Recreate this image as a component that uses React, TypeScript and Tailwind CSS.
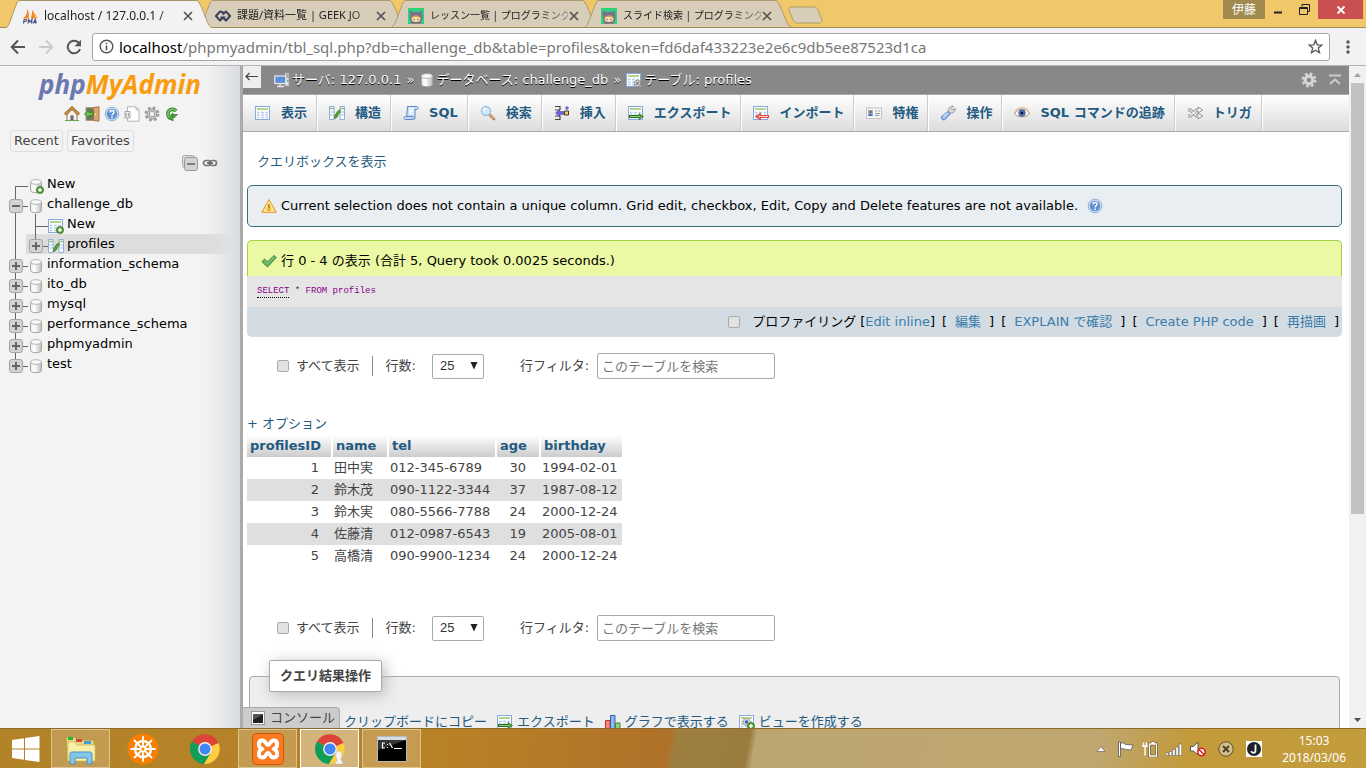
import React from 'react'

type P = { className?: string }

const Svg = ({ children, className = 'size-4' }: { children: React.ReactNode; className?: string }) => (
  <svg viewBox="0 0 16 16" className={'shrink-0 ' + className} fill="none" aria-hidden="true">
    {children}
  </svg>
)

const Grid = () => (
  <>
    <rect x=".5" y="1.5" width="14" height="13" fill="#fff" stroke="#86a8dc" />
    <path d="M2 4h11" stroke="#9bcb7a" strokeWidth="1.600" />
    <path d="M2 7.5h2.500M6 7.500h3M10.500 7.500H13M2 10h2.500M6 10h3M10.500 10H13M2 12.500h2.500M6 12.500h3M10.500 12.500H13" stroke="#b4cbea" strokeWidth="1.400" />
  </>
)
const Plus = () => (
  <>
    <circle cx="12" cy="12" r="3.600" fill="#4f9a2f" stroke="#2f6e17" strokeWidth=".6" />
    <path d="M12 10v4M10 12h4" stroke="#fff" strokeWidth="1.400" />
  </>
)
const TableIcon = (p: P) => <Svg {...p}><Grid /></Svg>
const TableNewIcon = (p: P) => <Svg {...p}><Grid /><Plus /></Svg>
const TableGearIcon = (p: P) => (
  <Svg {...p}>
    <Grid />
    <circle cx="11.500" cy="11.500" r="3.200" fill="#ccc" stroke="#8a8a8a" strokeWidth="1.400" strokeDasharray="1.600 .9" />
    <circle cx="11.500" cy="11.500" r="1.200" fill="#777" />
  </Svg>
)
const StructIcon = (p: P) => (
  <Svg {...p}>
    <path d="M.5 1.500h4.500v13H.5zM11 1.500h4.500v13H11z" fill="#fff" stroke="#8fb0de" />
    <path d="M1 3.500h4M11 3.500h4" stroke="#8fc06c" strokeWidth="1.500" />
    <path d="M1 7h4M1 10h4M11 7h4M11 10h4" stroke="#a9c3e6" />
    <path d="M5 12.500c3 0 3-6 6.500-6.500" stroke="#2f7d1e" strokeWidth="3" />
    <path d="M5 12.500c3 0 3-6 6.500-6.500" stroke="#66b04a" strokeWidth="1.400" />
  </Svg>
)
const DbShape = () => (
  <>
    <path d="M2.500 4v8.500c0 1.300 2.500 2.200 5.500 2.200s5.500-.9 5.500-2.200V4" fill="url(#dbg)" stroke="#a5a5a5" />
    <ellipse cx="8" cy="4" rx="5.500" ry="2.300" fill="#fafafa" stroke="#b5b5b5" />
  </>
)
const DbIcon = (p: P) => <Svg {...p}><DbShape /></Svg>
const DbNewIcon = (p: P) => <Svg {...p}><DbShape /><Plus /></Svg>
const SqlIcon = (p: P) => (
  <Svg {...p}>
    <path d="M4.500 1.500h9c1.800 0 1.800 3 .2 3H12v8.300c0 2-1.500 2-2.500 1.700H2.500c-2-.2-2-3 0-3h1.200z" fill="#c9dcf6" stroke="#5c86c5" />
    <path d="M6 3.500h5M6 6h4.500M6 8.500h4.500" stroke="#fff" strokeWidth="1.500" />
    <path d="M2.500 11.500H10v2" stroke="#5c86c5" />
  </Svg>
)
const SearchIcon = (p: P) => (
  <Svg {...p}>
    <path d="M9.500 9.500l4.500 4.500" stroke="#a9744a" strokeWidth="2.600" strokeLinecap="round" />
    <path d="M10.500 10l3.500 3.500" stroke="#e6b27c" strokeWidth="1.200" strokeLinecap="round" />
    <circle cx="6" cy="6" r="4.500" fill="#d3e8fb" stroke="#a3c1e6" strokeWidth="1.500" />
    <path d="M3.500 6A2.500 2.500 0 0 1 6 3.500" stroke="#fff" strokeWidth="1.300" />
  </Svg>
)
const InsertIcon = (p: P) => (
  <Svg {...p}>
    <path d="M1 1.500h5v3.500M1 5h5M1 11h5v3.500H1M6 11v4" stroke="#444" strokeWidth="1.200" />
    <path d="M1.500 8l4-3.500v2h4v3h-4v2z" fill="#6b62d6" stroke="#3f37a5" strokeWidth=".5" />
    <path d="M10.500 6h4v4h-4z" fill="#f5d94c" stroke="#333" />
    <path d="M13 1v4M11 3h4" stroke="#4a42b5" />
  </Svg>
)
const ExportIcon = (p: P) => (
  <Svg {...p}>
    <Grid />
    <path d="M1 11.500h10.500" stroke="#1f6312" strokeWidth="3" />
    <path d="M11 8.500l4.500 3-4.500 3z" fill="#4fa338" stroke="#1f6312" strokeWidth=".6" />
    <path d="M2 11.500h10" stroke="#8fd07a" strokeWidth="1.200" />
  </Svg>
)
const ImportIcon = (p: P) => (
  <Svg {...p}>
    <Grid />
    <path d="M6 11.500h10" stroke="#e2403a" strokeWidth="3" />
    <path d="M7.500 8l-5 3.500 5 3.500z" fill="#f0625c" stroke="#d42d27" strokeWidth=".6" />
    <path d="M6 11.500h9" stroke="#fbd0cd" strokeWidth="1.200" />
  </Svg>
)
const CardIcon = (p: P) => (
  <Svg {...p}>
    <rect x=".5" y="3" width="15" height="10.500" fill="#f7f7f7" stroke="#c4c4c4" />
    <rect x="2" y="5" width="5" height="6" fill="#8db4e6" />
    <circle cx="4.500" cy="7" r="1.400" fill="#a0623a" />
    <path d="M2.500 11c0-2.500 4-2.500 4 0z" fill="#3a62a3" />
    <path d="M9 6h2M12 6h2M9 8.500h5M9 10.500h4" stroke="#999" />
  </Svg>
)
const WrenchIcon = (p: P) => (
  <Svg {...p}>
    <path d="M8.500 6.500C8 3 10.500.8 13.500 1.200L11.300 3.500l1.300 1.600L15.200 3.500c.4 3-1.900 4.900-5 4.300z" fill="#dcdcdc" stroke="#888" strokeWidth=".8" />
    <path d="M7.800 6.600l2.500 2.300-5 5.300c-2 2-5.300-.8-3.300-3z" fill="#9bbcf0" stroke="#4f7dc4" />
    <path d="M3.500 11.500l4-3.500" stroke="#dbe8fc" strokeWidth="1.200" />
  </Svg>
)
const EyeIcon = (p: P) => (
  <Svg {...p}>
    <path d="M.5 8.500C4 2.500 12 2.500 15.500 8.500 12 13 4 13 .5 8.500z" fill="#fff" stroke="#c59d7e" strokeWidth="1.200" />
    <path d="M1 6.500C5 1.500 11 1.500 15 6.500" stroke="#e2c3a8" strokeWidth="1.400" />
    <circle cx="8" cy="8" r="3.300" fill="#4d7fd0" stroke="#2d4f8d" strokeWidth=".7" />
    <circle cx="8" cy="8" r="1.400" fill="#111" />
  </Svg>
)
const TriggerIcon = (p: P) => (
  <Svg {...p}>
    <g stroke="#8d8d8d" strokeWidth="3"><path d="M1 5h2.500l6 6H12M1 11h2.500l6-6H12" /></g>
    <path d="M11 2l4.500 3L11 8zM11 8l4.500 3L11 14z" fill="#fff" stroke="#8d8d8d" />
    <path d="M1 5h2.500l6 6H12M1 11h2.500l6-6H12" stroke="#f4f4f4" strokeWidth="1.200" />
  </Svg>
)
const ServerIcon = (p: P) => (
  <Svg {...p}>
    <path d="M10.500.8h4.700v13.400h-4.700z" fill="#ddd" stroke="#8d8d8d" />
    <path d="M11.500 3h3M11.500 5h3" stroke="#777" />
    <rect x="13" y="8" width="1.500" height="1.500" fill="#4caf50" />
    <rect x=".8" y="4" width="11" height="7.500" fill="#5c8edb" stroke="#e4e4e4" strokeWidth="1.300" />
    <path d="M6 12v2M3 14.500h7" stroke="#e4e4e4" strokeWidth="1.600" />
  </Svg>
)
const GearIcon = ({ className, color = '#9c9c9c' }: P & { color?: string }) => (
  <Svg className={className}>
    <circle cx="8" cy="8" r="6.300" stroke={color} strokeWidth="2.400" strokeDasharray="2.700 2.248" />
    <circle cx="8" cy="8" r="3.800" stroke={color} strokeWidth="3.200" />
    <circle cx="8" cy="8" r="3.800" stroke="#d8d8d8" strokeWidth="1" />
  </Svg>
)
const HomeIcon = (p: P) => (
  <Svg {...p}>
    <path d="M3 7.500L8 3l5 4.500v7H3z" fill="#f1efe9" stroke="#8f7b62" />
    <path d="M1 8.500L8 2l7 6.500" stroke="#8c5316" strokeWidth="3" />
    <path d="M1 8.500L8 2l7 6.500" stroke="#d89b4c" strokeWidth="1.400" />
    <path d="M6.500 9.500h3v5h-3z" fill="#666" />
    <path d="M1 14.500h14" stroke="#68a34d" />
  </Svg>
)
const ExitIcon = (p: P) => (
  <Svg {...p}>
    <path d="M2 1.500h8v13H2z" fill="#6d7a66" stroke="#b39a7a" />
    <path d="M9.500 1.500l5.500-.7v14.400l-5.500-.7z" fill="#d9a56c" stroke="#a9763f" />
    <path d="M.5 8L5 4v2.300h4v3.400H5V12z" fill="#6cc04e" stroke="#2c7a1c" strokeWidth=".8" />
    <circle cx="11.500" cy="8.500" r=".8" fill="#fff2a0" />
  </Svg>
)
const HelpIcon = (p: P) => (
  <Svg {...p}>
    <circle cx="8" cy="8" r="6.800" fill="#cfe0f6" stroke="#7d9fcb" strokeWidth=".8" />
    <circle cx="8" cy="8" r="5.200" fill="#5f90cf" />
    <path d="M6 6.500C6 3.800 10 3.900 10 6.300 10 7.700 8 7.900 8 9.500" stroke="#fff" strokeWidth="1.500" />
    <rect x="7.200" y="10.500" width="1.600" height="1.600" fill="#fff" />
  </Svg>
)
const DocIcon = (p: P) => (
  <Svg {...p}>
    <path d="M3.500.8h8.500l3 3v11.400H3.500z" fill="#fff" stroke="#b5b5b5" />
    <path d="M12 .8v3h3" stroke="#b5b5b5" />
    <path d="M1 5.500h5v6.500H1z" fill="#f4f4f4" stroke="#a5a5a5" />
    <path d="M2.500 7v3.500M4.500 7v3.500" stroke="#a5a5a5" />
  </Svg>
)
const ReloadGreen = (p: P) => (
  <Svg {...p}>
    <path d="M12 5A4.600 4.600 0 1 0 8.500 12.500" stroke="#39852f" strokeWidth="3.800" />
    <path d="M12 5A4.600 4.600 0 1 0 8.500 12.500" stroke="#72bd62" strokeWidth="2" />
    <path d="M9 7v8l-3.500-3.500zM7 8.500h6.500L10 12z" fill="#57a847" stroke="#39852f" strokeWidth=".8" />
  </Svg>
)
const WarnIcon = (p: P) => (
  <Svg {...p}>
    <path d="M8 1.500l7.200 12.800H.8z" fill="#fbd35c" stroke="#e5942c" strokeLinejoin="round" />
    <path d="M8 3.700l5 9.400H3z" stroke="#fff3c4" strokeWidth=".8" />
    <path d="M8 6v4.500M8 11.500V13" stroke="#b07a1d" strokeWidth="1.500" />
  </Svg>
)
const TickIcon = (p: P) => (
  <Svg {...p}>
    <path d="M1 8.800L3.500 6l3 2.700L13 2.500l2.300 2L6.500 14z" fill="#5fae5b" stroke="#377d39" strokeWidth=".8" />
    <path d="M3.500 8l3 2.800L13 4.500" stroke="#9cd698" />
  </Svg>
)
const ChartIcon = (p: P) => (
  <Svg {...p}>
    <path d="M.5 6.500h4.500v8.700H.5z" fill="#f08a86" stroke="#c9302c" />
    <path d="M5.500 1.500H10v13.700H5.500z" fill="#93b7ee" stroke="#315fa8" />
    <path d="M10.500 9H15v6.200h-4.500z" fill="#93cf86" stroke="#3b8a2c" />
  </Svg>
)
const ViewIcon = (p: P) => (
  <Svg {...p}>
    <Grid />
    <circle cx="7.500" cy="8" r="3.600" fill="#c6d8f2" stroke="#c99a79" />
    <circle cx="7.500" cy="8" r="1.700" fill="#2f63b5" />
    <Plus />
  </Svg>
)
const ConsoleIcon = (p: P) => (
  <Svg {...p}>
    <rect x="1.500" y="1.500" width="13" height="13" fill="#fff" stroke="#9a9a9a" />
    <path d="M3 4h10v9H3z" fill="#222" />
    <path d="M3 4h10L3 10z" fill="#555" />
  </Svg>
)
const PmaFavicon = () => (
  <Svg>
    <path d="M5 1c2 2.500 2.500 6.500 1.500 9.500H1C4 8 5.500 5 5 1zM10 2c2.500 2 3.500 5.500 3 8.500H8.500C9.800 8 10.300 5 10 2z" fill="#f28c28" />
    <path d="M12.500 5c1.800 1.500 2.800 3.500 3 5.500H13z" fill="#f9b56d" />
    <path d="M1.500 15.500l.7-4h1.500c1.500 0 1.200 2-.4 2H2M6 15.500l.7-4L8 14l2-2.500-.5 4M11 15.500l2.300-4 .9 4M11.800 14.300h2" stroke="#4b4f80" strokeWidth="1.200" />
  </Svg>
)
const GeekFavicon = () => (
  <Svg>
    <path d="M8.500 4.500L5 3.500.9 8 5 12.500 8.500 9.500H5.500M7.500 6.500L11 3.500 15.100 8 11 12.500 7.500 9" stroke="#3b3c5c" strokeWidth="1.900" />
  </Svg>
)
const CatFavicon = () => (
  <Svg>
    <rect width="16" height="16" fill="#31d17b" />
    <path d="M1.500 2.500L5 4h6l3-1.500.5 8c0 3-3 4.500-6.500 4.500s-6-1.500-6-4.500z" fill="#77728f" />
    <path d="M3 15.500c0-2 2-2.500 5-2.500s5 .5 5 2.500z" fill="#a3547a" />
    <ellipse cx="8" cy="11" rx="4.500" ry="2.900" fill="#f6dcae" />
    <path d="M4 9.500c2-2 6-2 8 0" stroke="#d7a343" strokeWidth="1.500" />
    <path d="M6 11v1M10 11v1" stroke="#533" />
  </Svg>
)

const browserTabs = [
  { title: 'localhost / 127.0.0.1 /', icon: <PmaFavicon />, active: true, size: 'text-xs' },
  { title: '課題/資料一覧 | GEEK JO', icon: <GeekFavicon />, active: false, size: 'text-[11px]' },
  { title: 'レッスン一覧 | プログラミング', icon: <CatFavicon />, active: false, size: 'text-[10px]' },
  { title: 'スライド検索 | プログラミング', icon: <CatFavicon />, active: false, size: 'text-[10px]' },
]

function TabStrip() {
  return (
    <div className="flex h-7 shrink-0 items-stretch border-b border-[#a08a55] bg-[#f0c869] pl-1.5">
      {browserTabs.map((t, i) => (
        <div key={i} className={'relative -mr-[13px] flex w-[206px] items-center pr-3 pl-4 ' + (t.active ? 'z-10 -mb-px h-7' : '')}>
          <svg className="absolute inset-0 h-full w-full" viewBox="0 0 206 28" preserveAspectRatio="none" aria-hidden="true">
            <path d="M0 28C4 27 9 3 13 .5H191C196 3 201 27 206 28Z" fill={t.active ? '#f2f2f2' : '#d7cdb8'} />
            <path d="M0 28C4 27 9 3 13 .5H191C196 3 201 27 206 28" fill="none" stroke="#a8976b" />
          </svg>
          <div className="relative flex min-w-0 flex-1 items-center pt-1">
            {t.icon}
            <span className={'ml-1.5 w-[138px] whitespace-nowrap text-[#222] [mask-image:linear-gradient(to_right,black_80%,rgba(0,0,0,0.35))] ' + t.size}>{t.title}</span>
            <button aria-label="閉じる" className="ml-px shrink-0">
              <svg viewBox="0 0 10 10" className="size-2.5"><path d="M1 1l8 8M9 1L1 9" stroke="#555" strokeWidth="1.700" /></svg>
            </button>
          </div>
        </div>
      ))}
      <button aria-label="新しいタブ" className="ml-2 self-center">
        <svg viewBox="0 0 36 18" className="mt-0.5 ml-0.5 h-[18px] w-9"><path d="M3 1h23c2 0 3 1 4 3l4 10c0 2-1 3-2 3H9c-2 0-3-1-4-3L1 4c0-2 0-3 2-3z" fill="#d7cdb8" stroke="#b09b67" /></svg>
      </button>
      <div className="ml-auto flex h-[19px] items-stretch pr-[3px]">
        <button className="w-[42px] bg-[#a08a4d] text-xs leading-4 text-white">伊藤</button>
        <button aria-label="最小化" className="flex w-[26px] items-center justify-center">
          <svg viewBox="0 0 10 10" className="size-2.5"><path d="M1 7.500h8" stroke="#222" strokeWidth="2" /></svg>
        </button>
        <button aria-label="元に戻す" className="flex w-[27px] items-center justify-center">
          <svg viewBox="0 0 11 11" className="size-[11px]"><path d="M3 2.500V.5h7.500v7H8.500M.5 3.500h8v7h-8zM.5 4.500h8" fill="none" stroke="#222" /></svg>
        </button>
        <button aria-label="閉じる" className="flex w-[45px] items-center justify-center bg-[#c85050]">
          <svg viewBox="0 0 10 10" className="size-2.5"><path d="M1.500 1.500l7 7M8.500 1.500l-7 7" stroke="#fff" strokeWidth="1.800" /></svg>
        </button>
      </div>
    </div>
  )
}

function Toolbar() {
  return (
    <div className="flex h-[38px] shrink-0 items-center border-b border-[#b4b4b4] bg-[#f2f2f2] pr-4 pl-2.5">
      <button aria-label="戻る"><svg viewBox="0 0 16 16" className="size-4" fill="none"><path d="M15 8H2M8 1.500L1.700 8 8 14.500" stroke="#555" strokeWidth="2" /></svg></button>
      <button aria-label="進む" className="ml-3"><svg viewBox="0 0 16 16" className="size-4" fill="none"><path d="M1 8h13M8 1.500L14.300 8 8 14.500" stroke="#ccc" strokeWidth="2" /></svg></button>
      <button aria-label="再読み込み" className="ml-3"><svg viewBox="0 0 16 16" className="size-4" fill="none"><path d="M14 10.200A6.300 6.300 0 1 1 12.500 3.500" stroke="#555" strokeWidth="2" /><path d="M15 .8v6.400H8.600z" fill="#555" /></svg></button>
      <div className="ml-[10px] flex h-7 flex-1 items-center rounded-[3px] border border-[#a6a6a6] bg-white px-1.5">
        <svg viewBox="0 0 16 16" className="size-[15px]" fill="none"><circle cx="8" cy="8" r="6.700" stroke="#555" strokeWidth="1.500" /><path d="M8 7v5M8 4v1.700" stroke="#555" strokeWidth="1.700" /></svg>
        <a href="#" className="ml-[5px] flex-1 text-[15px] leading-6 whitespace-nowrap text-[#777]"><span className="text-black">localhost</span>/phpmyadmin/tbl_sql.php?db=challenge_db&amp;table=profiles&amp;token=fd6daf433223e2e6c9db5ee87523d1ca</a>
        <svg viewBox="0 0 16 16" className="size-[15px]" fill="none"><path d="M8 1.500l1.900 4.700 5 .3-3.900 3.200 1.300 4.900L8 11.900l-4.300 2.700L5 9.700 1.100 6.500l5-.3z" stroke="#555" strokeWidth="1.400" /></svg>
      </div>
      <button aria-label="メニュー" className="ml-4"><svg viewBox="0 0 4 14" className="h-3.5 w-1" fill="#555"><circle cx="2" cy="2" r="1.700" /><circle cx="2" cy="7" r="1.700" /><circle cx="2" cy="12" r="1.700" /></svg></button>
    </div>
  )
}

const Branch = ({ toggle, up = true, down = true }: { toggle?: '+' | '-'; up?: boolean; down?: boolean }) => (
  <svg viewBox="0 0 28 20" className="h-5 w-7 shrink-0" fill="none" aria-hidden="true">
    {up && <path d="M15.500 0v12" stroke="#666" />}
    {down && <path d="M15.500 12v8" stroke="#666" />}
    <path d="M15.500 12.500H30" stroke="#666" />
    {toggle && (
      <>
        <rect x="9.500" y="5.500" width="13" height="13" rx="2.500" fill="#d3d3d3" stroke="#a5a5a5" />
        <path d="M12 12h8" stroke="#666" strokeWidth="2" />
        {toggle === '+' && <path d="M16 8v8" stroke="#666" strokeWidth="2" />}
      </>
    )}
  </svg>
)

type Node = { label: string; toggle?: '+' | '-'; kind: 'dbnew' | 'db' | 'tnew' | 'table'; nested?: boolean; up?: boolean; down?: boolean; current?: boolean }
const tree: Node[] = [
  { label: 'New', kind: 'dbnew', up: false },
  { label: 'challenge_db', kind: 'db', toggle: '-' },
  { label: 'New', kind: 'tnew', nested: true },
  { label: 'profiles', kind: 'table', toggle: '+', nested: true, down: false, current: true },
  { label: 'information_schema', kind: 'db', toggle: '+' },
  { label: 'ito_db', kind: 'db', toggle: '+' },
  { label: 'mysql', kind: 'db', toggle: '+' },
  { label: 'performance_schema', kind: 'db', toggle: '+' },
  { label: 'phpmyadmin', kind: 'db', toggle: '+' },
  { label: 'test', kind: 'db', toggle: '+', down: false },
]
const nodeIcon = { dbnew: DbNewIcon, db: DbIcon, tnew: TableNewIcon, table: StructIcon }

function Sidebar() {
  return (
    <aside className="w-[243px] shrink-0 border-r-[3px] border-[#aaa] bg-[linear-gradient(to_right,#f3f3f3_85%,#dadde0)]">
      <div className="flex h-9 items-center justify-center font-['Noto_Sans',sans-serif] text-[26px] font-bold italic leading-9">
        <span className="text-[#6c78af]">php</span><span className="text-[#f89c0e]">MyAdmin</span>
      </div>
      <div className="flex h-6 items-center gap-1 pl-16">
        <HomeIcon /><ExitIcon /><HelpIcon /><DocIcon /><GearIcon /><ReloadGreen />
      </div>
      <div className="mt-1 flex gap-1 pl-2.5 text-[#444]">
        <button className="h-[22px] rounded-[3px] border border-[#ddd] px-[3px] leading-5">Recent</button>
        <button className="h-[22px] rounded-[3px] border border-[#ddd] px-[3px] leading-5">Favorites</button>
      </div>
      <div className="flex h-[22px] items-center justify-end gap-1 pr-[22px]">
        <svg viewBox="0 0 16 16" className="size-4" fill="none"><rect x=".5" y=".5" width="12" height="12" rx="2" fill="#ddd" stroke="#aaa" /><rect x="2.500" y="2.500" width="13" height="13" rx="2" fill="#d3d3d3" stroke="#999" /><path d="M5 9h8" stroke="#666" strokeWidth="1.600" /></svg>
        <svg viewBox="0 0 16 16" className="size-4" fill="none"><rect x="1.500" y="5.500" width="7" height="5" rx="2.500" stroke="#777" strokeWidth="1.700" /><rect x="7.500" y="5.500" width="7" height="5" rx="2.500" stroke="#777" strokeWidth="1.700" /><path d="M5 8h6" stroke="#555" strokeWidth="1.500" /></svg>
      </div>
      <ul>
        {tree.map((n, i) => {
          const Icon = nodeIcon[n.kind]
          return (
            <li key={i} className={'flex h-5 items-center ' + (n.current ? 'bg-[linear-gradient(to_right,transparent_26px,#ddd_26px,#ddd_90%,transparent)]' : '')}>
              {n.nested && <svg viewBox="0 0 20 20" className="size-5 shrink-0"><path d="M15.500 0v20" stroke="#666" /></svg>}
              {n.toggle ? <button aria-label={n.label}><Branch toggle={n.toggle} up={n.up} down={n.down} /></button> : <Branch up={n.up} down={n.down} />}
              <Icon className="mt-1 size-4" />
              <a href="#" className="ml-[3px] leading-5 text-black">{n.label}</a>
            </li>
          )
        })}
      </ul>
    </aside>
  )
}

const menu = [
  { label: '表示', icon: <TableIcon /> },
  { label: '構造', icon: <StructIcon /> },
  { label: 'SQL', icon: <SqlIcon /> },
  { label: '検索', icon: <SearchIcon /> },
  { label: '挿入', icon: <InsertIcon /> },
  { label: 'エクスポート', icon: <ExportIcon /> },
  { label: 'インポート', icon: <ImportIcon /> },
  { label: '特権', icon: <CardIcon /> },
  { label: '操作', icon: <WrenchIcon /> },
  { label: 'SQL コマンドの追跡', icon: <EyeIcon /> },
  { label: 'トリガ', icon: <TriggerIcon /> },
]

function ResultControls({ id }: { id: string }) {
  return (
    <div className="flex h-[26px] items-center pl-[30px] text-[#444]">
      <input id={id + '-all'} type="checkbox" className="size-3 appearance-none rounded-[2px] border border-[#aaa] bg-[#e2e2e2]" />
      <label htmlFor={id + '-all'} className="ml-[7px]">すべて表示</label>
      <span className="ml-3 h-5 w-px bg-[#888]" />
      <label htmlFor={id + '-rows'} className="ml-[13px]">行数:</label>
      <div className="ml-4 grid items-center">
        <select id={id + '-rows'} className="col-start-1 row-start-1 h-[25px] w-[52px] appearance-none rounded-[2px] border border-[#aaa] bg-white pl-[7px] font-['Liberation_Sans',sans-serif] text-[13px] text-[#333]">
          <option>25</option>
        </select>
        <svg viewBox="0 0 8 8" className="pointer-events-none col-start-1 row-start-1 mr-[6px] size-2 justify-self-end"><path d="M.5 0h7L4 7.500z" fill="#222" /></svg>
      </div>
      <label htmlFor={id + '-filter'} className="ml-9">行フィルタ:</label>
      <input id={id + '-filter'} placeholder="このテーブルを検索" className="ml-2 h-[26px] w-[178px] rounded-[2px] border border-[#aaa] bg-white px-1 placeholder:text-[#777]" />
    </div>
  )
}

const columns = ['profilesID', 'name', 'tel', 'age', 'birthday']
const rows = [
  ['1', '田中実', '012-345-6789', '30', '1994-02-01'],
  ['2', '鈴木茂', '090-1122-3344', '37', '1987-08-12'],
  ['3', '鈴木実', '080-5566-7788', '24', '2000-12-24'],
  ['4', '佐藤清', '012-0987-6543', '19', '2005-08-01'],
  ['5', '高橋清', '090-9900-1234', '24', '2000-12-24'],
]
const colWidth = ['w-[85px]', 'w-[56px]', 'w-[108px]', 'w-[44px]', 'w-[82px]']

function Main() {
  return (
    <main className="relative min-w-0 flex-1 overflow-hidden bg-white">
      <div className="flex h-[29px] items-center border-b border-[#aaa] bg-[#888] pr-0.5 text-white [text-shadow:0_1px_0_#000]">
        <button aria-label="隠す" className="mb-1 flex h-[22px] w-[18px] items-center justify-center self-start bg-[#eee]">
          <svg viewBox="0 0 14 14" className="size-3.5" fill="none"><path d="M13 6.500H1M4.500 3L1 6.500 4.500 10" stroke="#444" strokeWidth="1.200" /></svg>
        </button>
        <nav className="ml-[13px] flex flex-1 items-center whitespace-nowrap">
          <ServerIcon /><a href="#" className="ml-[2px]">サーバ: 127.0.0.1</a><span className="mx-[5px]">»</span>
          <DbIcon /><a href="#" className="ml-px">データベース: challenge_db</a><span className="mx-[5px]">»</span>
          <TableGearIcon /><a href="#" className="ml-[2px]">テーブル: profiles</a>
        </nav>
        <GearIcon color="#d5d5d5" />
        <svg viewBox="0 0 12 12" className="mr-[6px] ml-3 size-3" fill="none"><path d="M0 1.500h12M1 10l5-4.500L11 10" stroke="#ccc" strokeWidth="1.800" /></svg>
      </div>
      <nav className="flex h-[37px] border-b border-[#aaa] bg-[linear-gradient(#fff,#dcdcdc)]">
        {menu.map((m) => (
          <a key={m.label} href="#" className="flex items-center border-r border-[#ccc] pr-[9px] pl-3 font-bold whitespace-nowrap text-[#235a81] shadow-[1px_0_0_#fff]">
            {m.icon}
            <span className="ml-[10px]">{m.label}</span>
          </a>
        ))}
      </nav>
      <div className="pr-[7px] pl-1">
        <div className="flex h-[53px] items-center pt-1.5 pl-[10px]"><a href="#" className="text-[#235a81]">クエリボックスを表示</a></div>
        <div className="flex h-[42px] items-center rounded-[5px] border border-[#3a6c7e] bg-[#e8eef1] pl-[13px] text-black">
          <WarnIcon /><span className="ml-1 whitespace-nowrap">Current selection does not contain a unique column. Grid edit, checkbox, Edit, Copy and Delete features are not available.</span><HelpIcon className="ml-[9px] size-4" />
        </div>
        <div className="mt-[13px] flex h-9 items-center rounded-t-[5px] border border-b-0 border-[#a2d246] bg-[#ebf8a4] pt-1 pl-[13px] text-black">
          <TickIcon /><span className="ml-1">行 0 - 4 の表示 (合計 5, Query took 0.0025 seconds.)</span>
        </div>
        <div className="h-[31px] bg-[#e5e5e5] pl-[10px] font-['Liberation_Mono',monospace] text-[9px] leading-[30px] text-[#808]">
          <a href="#" className="border-b border-dotted border-black pb-px">SELECT</a> <span className="text-[#333]">*</span> FROM profiles
        </div>
        <div className="flex h-[30px] items-center justify-end rounded-b-[5px] bg-[#d3dce3] pr-[3px] whitespace-nowrap text-black">
          <input id="profiling" type="checkbox" className="size-3 appearance-none rounded-[2px] border border-[#aaa] bg-[#e2e2e2]" />
          <label htmlFor="profiling" className="mr-1 ml-3">プロファイリング</label>
          <span>[</span><a href="#" className="text-[#3a7cab]">Edit inline</a><span>]</span>
          {['編集', 'EXPLAIN で確認', 'Create PHP code', '再描画'].map((l) => (
            <React.Fragment key={l}>
              <span className="ml-[7px]">[</span><a href="#" className="mx-2 text-[#3a7cab]">{l}</a><span>]</span>
            </React.Fragment>
          ))}
        </div>
        <div className="mt-4"><ResultControls id="top" /></div>
        <div className="mt-[35px] h-[21px] leading-5"><a href="#" className="text-[#235a81]">+ オプション</a></div>
        <table className="table-fixed border-collapse text-[#444]">
          <thead>
            <tr className="h-[22px]">
              {columns.map((c, i) => (
                <th key={c} className={'bg-[linear-gradient(#fff,#ccc)] p-0 px-[3px] text-left leading-5 font-bold text-[#235a81] not-last:border-r-2 not-last:border-white ' + colWidth[i]}>{c}</th>
              ))}
            </tr>
          </thead>
          <tbody>
            {rows.map((r) => (
              <tr key={r[0]} className="h-[22px] even:bg-[#dfdfdf]">
                {r.map((v, i) => (
                  <td key={i} className={'p-0 leading-5 ' + (i === 0 ? 'pr-[13px] text-right' : i === 3 ? 'pr-[14px] text-right' : 'pl-[2px]')}>{v}</td>
                ))}
              </tr>
            ))}
          </tbody>
        </table>
        <div className="mt-12"><ResultControls id="bottom" /></div>
        <fieldset className="mt-[19px] mr-[2px] ml-[2px] h-40 rounded-[4px] border border-[#aaa] bg-[#eee]">
          <legend className="ml-[19px] h-8 rounded-[2px] border border-[#aaa] bg-white px-2.5 leading-[30px] font-bold text-[#444] shadow-[3px_3px_15px_#bbb]">クエリ結果操作</legend>
          <div className="flex items-center pt-5 pl-[94px] whitespace-nowrap text-[#235a81]">
            <a href="#" className="leading-5">クリップボードにコピー</a>
            <a href="#" className="ml-[10px] flex items-center gap-1"><ExportIcon />エクスポート</a>
            <a href="#" className="ml-[10px] flex items-center gap-1"><ChartIcon />グラフで表示する</a>
            <a href="#" className="ml-[10px] flex items-center gap-1"><ViewIcon />ビューを作成する</a>
          </div>
        </fieldset>
      </div>
      <button className="absolute bottom-0 left-0 flex h-[21px] items-center gap-1 rounded-tr-[4px] border-t border-r border-[#aaa] bg-[#ccc] pr-1 pl-[7px] text-[#444]">
        <ConsoleIcon />コンソール
      </button>
    </main>
  )
}

function Scrollbar() {
  return (
    <div className="flex w-[17px] shrink-0 flex-col items-center bg-[#f1f1f1]">
      <svg viewBox="0 0 17 17" className="size-[17px]"><path d="M5 11l3.500-4 3.500 4z" fill="#a3a3a3" /></svg>
      <div className="h-[431px] w-[13px] bg-[#c1c1c1]" />
      <svg viewBox="0 0 17 17" className="mt-auto size-[17px]"><path d="M5 7l3.500 4L12 7z" fill="#505050" /></svg>
    </div>
  )
}

const Chrome = ({ user = false }: { user?: boolean }) => (
  <svg viewBox="0 0 32 32" className="size-8">
    <path d="M16 16L3 8.500A15 15 0 0 1 29.500 10z" fill="#db4437" />
    <path d="M16 16L3 8.500A15 15 0 0 0 15 31l7-12z" fill="#0f9d58" />
    <path d="M16 16l13.500-6A15 15 0 0 1 15 31l7-11.500z" fill="#ffcd40" />
    <path d="M16 9.200h13.200L27 7 16 8z" fill="#db4437" />
    <circle cx="16" cy="16" r="6.900" fill="#f1f1f1" />
    <circle cx="16" cy="16" r="5.500" fill="#4285f4" />
    {user && <path d="M24 18c3 0 4 2 4 4s-1 3.500-1 4.500 2 1.500 2 4.500h-9l3-3-1-4c-.6-3 0-6 2-6z" fill="#f5f5f5" stroke="#aaa" strokeWidth=".5" />}
  </svg>
)

function Taskbar() {
  return (
    <footer className="flex h-10 shrink-0 items-stretch border-t border-[#8d6a2a] bg-[linear-gradient(100deg,#b28328_0%,#b98126_33%,#b07129_48.8%,#9d8040_49.5%,#9a7c3e_54.7%,#bba571_55.2%,#c0a771_80%,#c29a3a_87%,#c39d3c_100%)] font-['Noto_Sans','Noto_Sans_CJK_JP',sans-serif]">
      <button aria-label="スタート" className="flex w-[51px] items-center justify-center">
        <svg viewBox="0 0 28 26" className="h-[26px] w-7" fill="#fff"><path d="M0 4l12-1.700V12.500H0zM13 2.100L27.500 0v12.500H13zM0 13.500h12v10.200L0 22zM13 13.500h14.500V26L13 23.900z" /></svg>
      </button>
      <button aria-label="エクスプローラー" className="flex w-[59px] items-center justify-center border border-[#dcc390] bg-white/20">
        <svg viewBox="0 0 34 32" className="h-8 w-[34px]">
          <path d="M2 4h9l2 3h17v21H3z" fill="#ead97b" stroke="#b39b3f" />
          <path d="M4 4h5v3H4z" fill="#26b14c" /><path d="M12 6h6v3h-6z" fill="#d4473a" /><path d="M20 8h7v3h-7z" fill="#3aa2dd" />
          <path d="M4 9h7l2 3h18v16H4z" fill="#f8f0a8" stroke="#cbb75b" strokeWidth=".7" />
          <path d="M6 31V21c0-1 .6-2 2-2h18c1.500 0 2 1 2 2v10h-5v-6H11v6z" fill="#84c5e8" stroke="#4b93bd" />
        </svg>
      </button>
      <button aria-label="ツール" className="flex w-[66px] items-center justify-center">
        <svg viewBox="0 0 32 32" className="size-8" fill="none">
          <circle cx="16" cy="16" r="15.500" fill="#f77f00" />
          <circle cx="16" cy="16" r="8" stroke="#fff" strokeWidth="2.500" />
          <path d="M16 4v24M4 16h24M7.500 7.500l17 17M24.500 7.500l-17 17" stroke="#fff" strokeWidth="1.800" strokeLinecap="round" />
          <circle cx="16" cy="16" r="3.500" fill="#fff" /><circle cx="16" cy="16" r="1.500" fill="#f77f00" />
        </svg>
      </button>
      <button aria-label="Chrome" className="flex w-[58px] items-center justify-center"><Chrome /></button>
      <button aria-label="XAMPP" className="ml-1 flex w-[59px] items-center justify-center border border-[#dcc390] bg-white/20">
        <svg viewBox="0 0 32 32" className="size-8" fill="none">
          <rect x=".5" y=".5" width="31" height="31" rx="4" fill="#fb7a24" stroke="#d45500" />
          <path d="M10.500 16C6 15 5.500 8 10 7.500c4-.5 3.500 4.500 6 4.500s2-5 6-4.500c4.500.5 4 7.500-.5 8.500 4.500 1 5 8 .5 8.500-4 .5-3.500-4.500-6-4.500s-2 5-6 4.500C5.500 24 6 17 10.500 16z" stroke="#fff" strokeWidth="3.800" strokeLinejoin="round" />
        </svg>
      </button>
      <button aria-label="Chrome" className="ml-[3px] flex w-[59px] items-center justify-center border border-white bg-white/40"><Chrome user /></button>
      <button aria-label="コマンド プロンプト" className="ml-[3px] flex w-[59px] items-center justify-center border border-[#dcc390] bg-white/20">
        <svg viewBox="0 0 30 26" className="h-[26px] w-[30px]" fill="none">
          <rect x=".5" y=".5" width="29" height="25" fill="#000" stroke="#b9b9b9" />
          <path d="M1 2.500h28" stroke="#d5dde8" strokeWidth="3" />
          <path d="M1 4h28L1 14z" fill="#333" />
          <path d="M8 7H5.500v5H8M10.500 8v1M10.500 11v1M12.500 7l3 5M17 12.500h8" stroke="#fff" strokeWidth="1.200" />
        </svg>
      </button>
      <div className="ml-auto flex items-center gap-2 pr-[20px]">
        <svg viewBox="0 0 10 6" className="mr-1 h-1.5 w-2.5"><path d="M1 5.500L5 .5l4 5z" fill="#fff" stroke="#555" strokeWidth=".6" /></svg>
        <svg viewBox="0 0 16 16" className="size-4"><path d="M.5 1h2v14.500h-2zM2.500 2c4-1 4 2 6 1.500l6.500.5-2 5-4.500-.5c-2 0-2-1.500-6-.5z" fill="#fff" stroke="#555" strokeWidth=".8" /></svg>
        <svg viewBox="0 0 16 16" className="size-4" fill="none"><path d="M7.500 3h7v12h-7zM9.500 1.500h3" stroke="#4d4226" strokeWidth="2.600" /><path d="M7.500 3h7v12h-7zM9.500 1.500h3M0 5h6M3 5v9.500M1.500 1.500V6M4.500 1.500V6" stroke="#fff" strokeWidth="1.400" /></svg>
        <svg viewBox="0 0 16 16" className="size-4" fill="#fff" stroke="#555" strokeWidth=".5"><path d="M0 12h2.500v2.500H0zM3.300 10.500h2.500v4H3.300zM6.600 8.500h2.500v6H6.600zM9.900 6h2.500v8.500H9.900zM13.200 3h2.500v11.500h-2.500z" /></svg>
        <svg viewBox="0 0 16 16" className="size-4"><path d="M.5 5.500h3L8 1v13L3.500 10H.5z" fill="#fff" stroke="#555" /><circle cx="11.500" cy="11" r="3.700" fill="#fff" stroke="#e02020" strokeWidth="1.600" /><path d="M8.800 8.300l5.400 5.400" stroke="#e02020" strokeWidth="1.600" /></svg>
        <svg viewBox="0 0 16 16" className="mx-1 size-4"><circle cx="8" cy="8" r="7.200" fill="#d3bf8d" stroke="#5d4f2c" /><path d="M5 5l6 6M11 5l-6 6" stroke="#4d4226" strokeWidth="2" /></svg>
        <svg viewBox="0 0 16 16" className="size-4"><rect width="16" height="16" fill="#fff" /><circle cx="8" cy="8" r="7" fill="#1d2126" /><path d="M9.500 3.500v6c0 3-4 3-4 .5" fill="none" stroke="#fff" strokeWidth="1.800" /></svg>
        <div className="ml-3 text-center text-xs leading-[17px] text-white"><div>15:03</div><div>2018/03/06</div></div>
      </div>
    </footer>
  )
}

export default function App() {
  return (
    <div className="flex h-screen flex-col overflow-hidden font-['Noto_Sans','Noto_Sans_CJK_JP',sans-serif]">
      <svg className="absolute size-0" aria-hidden="true">
        <defs>
          <linearGradient id="dbg"><stop offset="0" stopColor="#e8e8e8" /><stop offset=".35" stopColor="#fff" /><stop offset="1" stopColor="#bbb" /></linearGradient>
        </defs>
      </svg>
      <TabStrip />
      <Toolbar />
      <div className="flex min-h-0 flex-1 overflow-hidden font-['DejaVu_Sans','Noto_Sans_CJK_JP',sans-serif] text-[13px]">
        <Sidebar />
        <Main />
        <Scrollbar />
      </div>
      <Taskbar />
    </div>
  )
}
